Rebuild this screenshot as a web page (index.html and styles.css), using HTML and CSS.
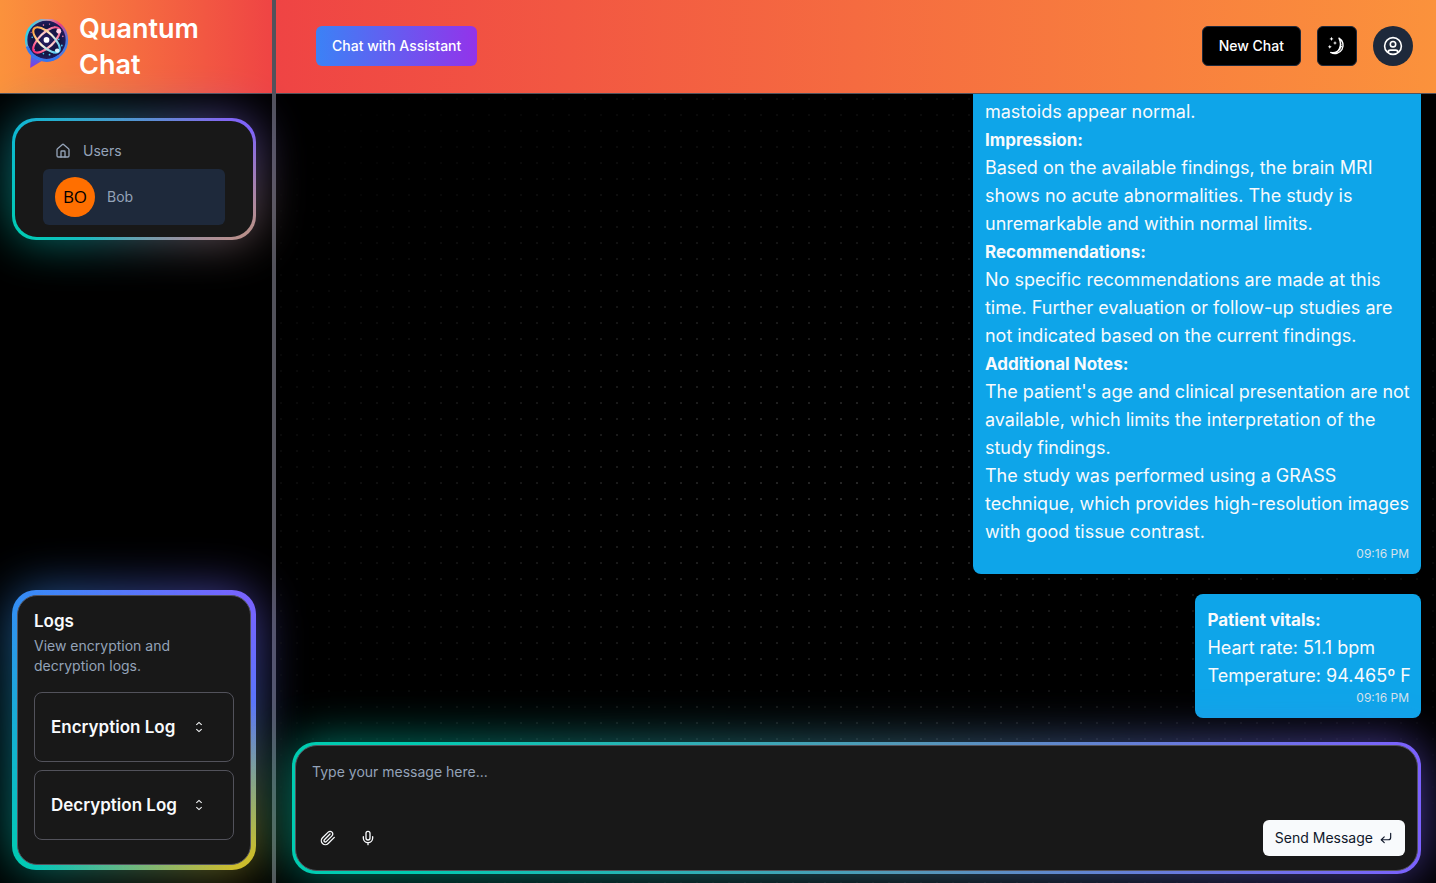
FILE: index.html
```html
<!DOCTYPE html>
<html lang="en">
<head>
<meta charset="utf-8">
<meta name="viewport" content="width=device-width, initial-scale=1">
<title>Quantum Chat</title>
<link rel="stylesheet" href="styles.css">
</head>
<body>
<div class="app">
  <aside class="sidebar">
    <header class="brand">
      <svg class="brand-logo" viewBox="0 0 44 50" aria-hidden="true">
        <defs>
          <linearGradient id="rim" x1="0" y1="0.3" x2="1" y2="0.7">
            <stop offset="0" stop-color="#25d5ee"/>
            <stop offset="0.35" stop-color="#c99bb0"/>
            <stop offset="0.65" stop-color="#f03a7c"/>
            <stop offset="1" stop-color="#2f86f2"/>
          </linearGradient>
          <linearGradient id="tail" x1="0" y1="0" x2="0" y2="1">
            <stop offset="0" stop-color="#2787ee"/>
            <stop offset="1" stop-color="#8a35e0"/>
          </linearGradient>
          <radialGradient id="space" cx="0.5" cy="0.5" r="0.55">
            <stop offset="0" stop-color="#2a1d63"/>
            <stop offset="0.6" stop-color="#131541"/>
            <stop offset="1" stop-color="#28206e"/>
          </radialGradient>
          <linearGradient id="orbit-a" x1="0" y1="0" x2="1" y2="0">
            <stop offset="0" stop-color="#ff2f78"/>
            <stop offset="0.5" stop-color="#ffd9d0"/>
            <stop offset="1" stop-color="#f0508a"/>
          </linearGradient>
          <linearGradient id="orbit-b" x1="0" y1="0" x2="1" y2="0">
            <stop offset="0" stop-color="#ffa23a"/>
            <stop offset="0.5" stop-color="#fff0d8"/>
            <stop offset="1" stop-color="#42c9f5"/>
          </linearGradient>
        </defs>
        <path d="M7 32 6 48 21 39Z" fill="url(#tail)"/>
        <circle cx="22" cy="20.500" r="20" fill="url(#space)" stroke="url(#rim)" stroke-width="2.400"/>
        <path d="M3 27a20 20 0 0 0 31 9.500" fill="none" stroke="#3477ef" stroke-width="2.800"/>
        <g fill="#48c6ee">
          <circle cx="8" cy="18" r=".8"/><circle cx="10" cy="25" r=".8"/><circle cx="13" cy="8" r=".7"/>
          <circle cx="19" cy="34" r=".8"/><circle cx="25" cy="35" r=".9"/><circle cx="37" cy="26" r=".9"/>
          <circle cx="34" cy="20" r=".8"/><circle cx="10" cy="30" r=".7"/><circle cx="29" cy="33" r=".7"/>
        </g>
        <g fill="#f57ba8">
          <circle cx="19" cy="6" r=".8"/><circle cx="25" cy="5" r=".7"/><circle cx="30" cy="8" r=".8"/>
          <circle cx="22" cy="11" r=".8"/><circle cx="38" cy="17" r=".8"/><circle cx="7" cy="13" r=".6"/>
        </g>
        <ellipse cx="22" cy="20.500" rx="16.500" ry="7" transform="rotate(-43 22 20.500)" fill="none" stroke="url(#orbit-a)" stroke-width="2.100"/>
        <ellipse cx="22" cy="20.500" rx="16.500" ry="7" transform="rotate(43 22 20.500)" fill="none" stroke="url(#orbit-b)" stroke-width="2.100"/>
        <circle cx="22" cy="20.500" r="2.800" fill="#fff"/>
        <circle cx="34" cy="12" r="2.400" fill="#ffd0e2"/>
        <circle cx="32.500" cy="31" r="2.200" fill="#d8f3ff"/>
      </svg>
      <h1 class="brand-name">Quantum Chat</h1>
    </header>

    <div class="sidebar-body">
      <section class="glow-card glow-users">
        <nav class="glow-inner users">
          <a class="user-row user-heading" href="#">
            <svg class="icon-16" viewBox="0 0 24 24" fill="none" stroke="currentColor" stroke-width="2" stroke-linecap="round" stroke-linejoin="round" aria-hidden="true"><path d="M15 21v-8a1 1 0 0 0-1-1h-4a1 1 0 0 0-1 1v8"/><path d="M3 10a2 2 0 0 1 .709-1.528l7-5.999a2 2 0 0 1 2.582 0l7 5.999A2 2 0 0 1 21 10v9a2 2 0 0 1-2 2H5a2 2 0 0 1-2-2z"/></svg>
            <span>Users</span>
          </a>
          <a class="user-row user-active" href="#">
            <span class="initials">BO</span>
            <span>Bob</span>
          </a>
        </nav>
      </section>

      <section class="glow-card glow-logs">
        <div class="glow-inner logs">
          <h2 class="logs-title">Logs</h2>
          <p class="logs-text">View encryption and decryption logs.</p>
          <div class="log-list">
            <button class="log-item" type="button"><span class="log-name">Encryption Log</span>
              <svg class="icon-16" viewBox="0 0 15 15" fill="none" stroke="currentColor" aria-hidden="true"><path d="M5 5.600 7.500 3.200 10 5.600M5 9.400l2.500 2.400L10 9.400"/></svg>
            </button>
            <button class="log-item" type="button"><span class="log-name">Decryption Log</span>
              <svg class="icon-16" viewBox="0 0 15 15" fill="none" stroke="currentColor" aria-hidden="true"><path d="M5 5.600 7.500 3.200 10 5.600M5 9.400l2.500 2.400L10 9.400"/></svg>
            </button>
          </div>
        </div>
      </section>
    </div>
  </aside>

  <div class="divider" role="separator"></div>

  <main class="main">
    <header class="topbar">
      <button class="btn btn-assistant" type="button">Chat with Assistant</button>
      <div class="topbar-actions">
        <button class="btn btn-dark" type="button">New Chat</button>
        <button class="btn btn-dark btn-square" type="button" aria-label="Toggle theme">
          <svg class="icon-20" viewBox="0 0 20 20" aria-hidden="true">
            <path d="M12 2.200a8 8 0 1 1-8.300 14.300c4 .8 7-.6 8.600-3.400 1.900-3.300 1.500-7.200-.3-10.900Z" fill="none" stroke="currentColor" stroke-width="1.400" stroke-linejoin="round"/>
            <path d="m13 5 1.500 3.400-.5 1.100 1.200.9-1.500 1.800-.4 1.700-2.300 1.300-1.500 1.500-2.500.3 4-2.600 1.800-4Z" fill="currentColor"/>
            <path d="m4.500.8.6 1.500 1.500.6-1.500.6-.6 1.500-.6-1.500-1.500-.6 1.500-.6ZM8 5l.6 1.400 1.400.6-1.400.6L8 9l-.6-1.400L6 7l1.400-.6ZM2.800 8.800l.6 1.400 1.400.6-1.400.6-.6 1.400-.6-1.400-1.400-.6 1.400-.6Z" fill="currentColor"/>
          </svg>
        </button>
        <button class="btn btn-account" type="button" aria-label="Account">
          <svg class="icon-20" viewBox="0 0 20 20" fill="none" stroke="currentColor" stroke-width="1.600" aria-hidden="true"><circle cx="10" cy="10" r="8.400"/><circle cx="10" cy="8.200" r="2.700"/><path d="M5 16.400c0-1.500.9-2.300 2.400-2.300h5.200c1.500 0 2.400.8 2.400 2.300"/></svg>
        </button>
      </div>
    </header>

    <div class="chat">
      <div class="messages">
        <article class="bubble">
          <p>mastoids appear normal.</p>
          <h3>Impression:</h3>
          <p>Based on the available findings, the brain MRI shows no acute abnormalities. The study is unremarkable and within normal limits.</p>
          <h3>Recommendations:</h3>
          <p>No specific recommendations are made at this time. Further evaluation or follow-up studies are not indicated based on the current findings.</p>
          <h3>Additional Notes:</h3>
          <p>The patient's age and clinical presentation are not available, which limits the interpretation of the study findings.</p>
          <p>The study was performed using a GRASS technique, which provides high-resolution images with good tissue contrast.</p>
          <time>09:16 PM</time>
        </article>
        <article class="bubble">
          <h3>Patient vitals:</h3>
          <p>Heart rate: 51.1 bpm</p>
          <p>Temperature: 94.465º F</p>
          <time>09:16 PM</time>
        </article>
      </div>

      <div class="glow-card glow-composer">
        <form class="glow-inner composer">
          <textarea class="composer-input" rows="2" placeholder="Type your message here..." aria-label="Message"></textarea>
          <div class="composer-bar">
            <button class="btn-icon" type="button" aria-label="Attach file">
              <svg class="icon-16" viewBox="0 0 24 24" fill="none" stroke="currentColor" stroke-width="2" stroke-linecap="round" stroke-linejoin="round" aria-hidden="true"><path d="m21.440 11.050-9.190 9.190a6 6 0 0 1-8.490-8.490l8.570-8.570A4 4 0 1 1 18 8.840l-8.590 8.570a2 2 0 0 1-2.830-2.830l8.490-8.480"/></svg>
            </button>
            <button class="btn-icon" type="button" aria-label="Use microphone">
              <svg class="icon-16" viewBox="0 0 24 24" fill="none" stroke="currentColor" stroke-width="2" stroke-linecap="round" stroke-linejoin="round" aria-hidden="true"><path d="M12 2a3 3 0 0 0-3 3v7a3 3 0 0 0 6 0V5a3 3 0 0 0-3-3Z"/><path d="M19 10v2a7 7 0 0 1-14 0v-2"/><path d="M12 19v3"/></svg>
            </button>
            <button class="btn-send" type="submit">Send Message
              <svg class="icon-14" viewBox="0 0 24 24" fill="none" stroke="currentColor" stroke-width="2" stroke-linecap="round" stroke-linejoin="round" aria-hidden="true"><path d="m9 10-5 5 5 5"/><path d="M20 4v7a4 4 0 0 1-4 4H4"/></svg>
            </button>
          </div>
        </form>
      </div>
    </div>
  </main>
</div>
</body>
</html>
```

FILE: styles.css
```css
*, *::before, *::after { box-sizing: border-box; }

body {
  margin: 0;
  background: #000;
  color: #f8fafc;
  font: 14px/20px Inter, "Liberation Sans", sans-serif;
}

h1, h2, h3, p { margin: 0; }
a { color: inherit; text-decoration: none; }
button, textarea { font: inherit; color: inherit; }
button { cursor: pointer; }
svg { display: block; flex: none; }

.icon-14 { width: 14px; height: 14px; }
.icon-16 { width: 16px; height: 16px; }
.icon-20 { width: 20px; height: 20px; }

.app {
  display: grid;
  grid-template-columns: 19fr 4px 81fr;
  height: 100vh;
  overflow: hidden;
}

.divider { background: #52525b; }

.sidebar, .main {
  display: flex;
  flex-direction: column;
  min-width: 0;
  min-height: 0;
}

/* Sidebar header */
.brand {
  display: flex;
  align-items: flex-start;
  gap: 10px;
  min-height: 94px;
  padding: 11px 24px 10px;
  border-bottom: 1px solid #52525b;
  background: linear-gradient(to right, #fb923c, #ef4444);
}
.brand-logo { width: 45px; height: 51px; margin-top: 8px; }
.brand-name {
  font-size: 27px;
  line-height: 36px;
  font-weight: 600;
  color: #fff;
}

.sidebar-body {
  display: flex;
  flex: 1;
  flex-direction: column;
  justify-content: space-between;
  padding: 24px 16px 13px 12px;
}

/* Gradient-edged cards with a blurred halo */
.glow-card {
  position: relative;
  padding: 3px;
  border-radius: 24px;
}
.glow-card::before, .glow-card::after {
  content: "";
  position: absolute;
  inset: 0;
  border-radius: 24px;
  background: var(--edge);
  pointer-events: none;
}
.glow-card::before { filter: blur(24px); opacity: .6; }
.glow-inner {
  position: relative;
  z-index: 1;
  border-radius: 22px;
  background: #181818;
}
.glow-users {
  --edge:
    radial-gradient(ellipse 70% 90% at 100% 100%, #b8908c 10%, transparent),
    radial-gradient(circle farthest-side at 0 100%, #00ccb1, transparent),
    radial-gradient(circle farthest-side at 100% 0, #7b61ff, transparent),
    linear-gradient(to right, #1ca0fb, #c09080);
}
.glow-logs {
  --edge:
    radial-gradient(ellipse 90% 60% at 100% 100%, #cdbd2c 10%, transparent),
    radial-gradient(circle farthest-side at 0 100%, #00ccb1, transparent),
    radial-gradient(circle farthest-side at 100% 0, #7b61ff, transparent),
    linear-gradient(#2a92f5, #2a92f5);
  padding: 5px;
}
.glow-composer {
  --edge: linear-gradient(to right, #00ccb1 10%, #5597b8 55%, #7b61ff);
}

/* Users */
.users { padding: 12px 28px; }
.user-row {
  display: flex;
  align-items: center;
  gap: 12px;
  padding: 8px 12px;
  border-radius: 6px;
  color: #94a3b8;
}
.user-active { background: #1e293b; }
.initials {
  display: grid;
  place-items: center;
  width: 40px;
  height: 40px;
  border-radius: 50%;
  background: #ff6f00;
  color: #000;
  font: 17px/24px "Open Sans", "Noto Sans", sans-serif;
}

/* Logs */
.logs {
  padding: 16px 16px 24px;
  border: 1px solid #52525b;
  border-radius: 20px;
}
.logs-title {
  font-size: 17px;
  line-height: 18px;
  font-weight: 600;
}
.logs-text { margin: 6px 0 16px; color: #94a3b8; }
.log-list { display: grid; gap: 8px; }
.log-item {
  display: flex;
  align-items: center;
  gap: 14px;
  height: 70px;
  padding: 0 16px;
  border: 1px solid #52525b;
  border-radius: 8px;
  background: none;
  font-size: 17px;
  line-height: 28px;
  font-weight: 600;
  text-align: left;
  white-space: nowrap;
}
.log-name { min-width: 126px; }

/* Top bar */
.topbar {
  display: flex;
  align-items: center;
  justify-content: space-between;
  min-height: 94px;
  padding: 0 23px 1px 40px;
  border-bottom: 1px solid #52525b;
  background: linear-gradient(to right, #ef4444, #fb923c);
}
.topbar-actions { display: flex; gap: 16px; }
.btn {
  display: flex;
  align-items: center;
  justify-content: center;
  height: 40px;
  padding: 0 16px;
  border: 0;
  border-radius: 6px;
  font-weight: 500;
  color: #fff;
}
.btn-assistant { background: linear-gradient(to right, #3b82f6, #9333ea); }
.btn-dark { border: 1px solid #1e293b; background: #000; }
.btn-square { width: 40px; padding: 0; }
.btn-account {
  width: 40px;
  padding: 0;
  border-radius: 50%;
  background: #1e293b;
}

/* Conversation */
.chat {
  position: relative;
  display: flex;
  flex: 1;
  flex-direction: column;
  min-height: 0;
  padding: 0 15px 9px 16px;
}
.chat::before {
  content: "";
  position: absolute;
  inset: 0;
  background: conic-gradient(from 90deg at 14px 14px, #262626 90deg, transparent 0) 6px 6px / 16px 16px;
  -webkit-mask-image: radial-gradient(ellipse at center, #000, transparent 95%);
  mask-image: radial-gradient(ellipse at center, #000, transparent 95%);
  pointer-events: none;
}
.messages {
  position: relative;
  display: flex;
  flex: 1;
  flex-direction: column;
  align-items: flex-end;
  justify-content: flex-end;
  gap: 20px;
  min-height: 0;
  padding-bottom: 24px;
  overflow: hidden;
}
.bubble {
  flex: none;
  max-width: 448px;
  padding: 12px;
  border-radius: 8px;
  background: #0ea5e9;
  color: #f8fafc;
  font-size: 18px;
  line-height: 28px;
}
.bubble p { margin-right: -2px; }
.bubble h3 { font-size: 17px; font-weight: 700; }
.bubble time {
  display: block;
  font-size: 12px;
  line-height: 16px;
  text-align: right;
  color: #d6e2ec;
}

/* Composer */
.composer {
  padding: 4px 12px 14px;
  border: 1px solid #52525b;
}
.composer-input {
  display: block;
  width: 100%;
  height: 70px;
  padding: 12px 4px;
  border: 0;
  outline: 0;
  resize: none;
  background: none;
}
.composer-input::placeholder { color: #94a3b8; opacity: 1; }
.composer-bar { display: flex; align-items: center; }
.btn-icon {
  display: grid;
  place-items: center;
  width: 40px;
  height: 36px;
  padding: 0;
  border: 0;
  background: none;
}
.btn-send {
  display: flex;
  align-items: center;
  gap: 6px;
  height: 36px;
  margin-left: auto;
  padding: 0 12px;
  border: 0;
  border-radius: 6px;
  background: #f8fafc;
  color: #0f172a;
}
```
